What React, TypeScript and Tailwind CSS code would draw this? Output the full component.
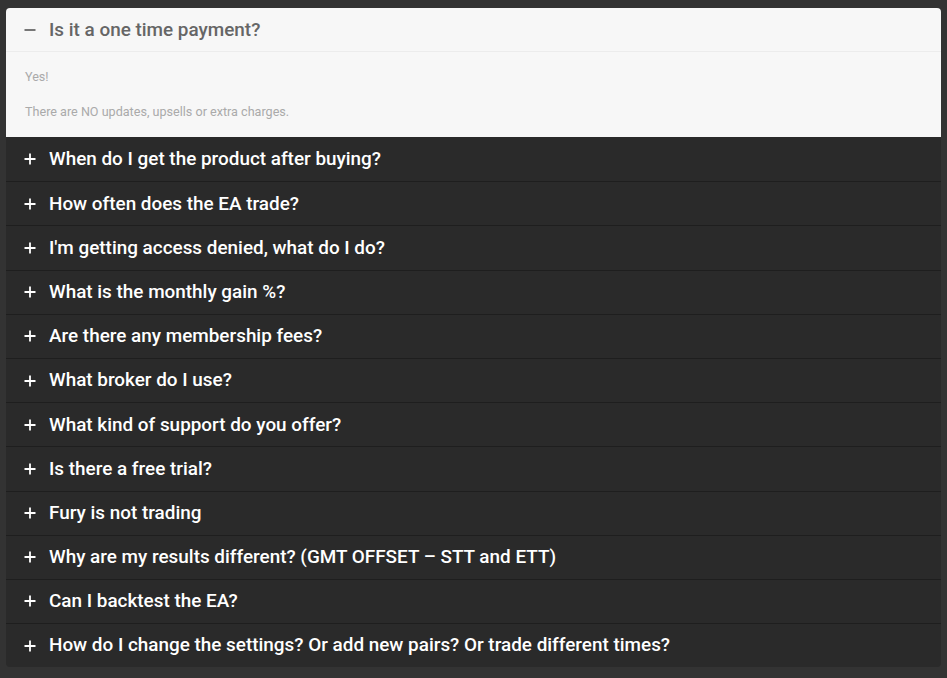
const questions = [
  "When do I get the product after buying?",
  "How often does the EA trade?",
  "I'm getting access denied, what do I do?",
  "What is the monthly gain %?",
  "Are there any membership fees?",
  "What broker do I use?",
  "What kind of support do you offer?",
  "Is there a free trial?",
  "Fury is not trading",
  "Why are my results different? (GMT OFFSET – STT and ETT)",
  "Can I backtest the EA?",
  "How do I change the settings? Or add new pairs? Or trade different times?",
];

function PlusIcon() {
  return (
    <svg width="12" height="12" viewBox="0 0 12 12" className="shrink-0">
      <path d="M6 0.5v11M0.5 6h11" stroke="#ffffff" strokeWidth="1.8" />
    </svg>
  );
}

function MinusIcon() {
  return (
    <svg width="12" height="12" viewBox="0 0 12 12" className="shrink-0">
      <path d="M0.5 6h11" stroke="#777777" strokeWidth="1.8" />
    </svg>
  );
}

export default function App() {
  return (
    <div
      className="min-h-[678px] w-full bg-[#333333] pt-2 pb-[11px] pl-[6px] pr-[6px]"
      style={{ fontFamily: "Roboto, 'Liberation Sans', sans-serif" }}
    >
      <div className="rounded-[4px] overflow-hidden bg-[#2a2a2a]">
        {/* open item */}
        <div className="bg-[#f7f7f7]">
          <div className="flex items-center gap-[13px] h-[44px] pt-[1px] pl-[18px] border-b border-[#ececec]">
            <MinusIcon />
            <span className="text-[18.9px] font-medium text-[#666666]">
              Is it a one time payment?
            </span>
          </div>
          <div className="pl-[19px] pt-[16px] pb-[16px] text-[12.6px] text-[#aaaaaa] leading-[18px]">
            <p>Yes!</p>
            <p className="mt-[17px]">There are NO updates, upsells or extra charges.</p>
          </div>
        </div>

        {/* closed items */}
        {questions.map((q, i) => (
          <div
            key={q}
            className={
              "flex items-center gap-[13px] h-[44.2px] pl-[18px] " +
              (i > 0 ? "border-t border-[#1e1e1e]" : "")
            }
          >
            <PlusIcon />
            <span className="text-[18.9px] font-medium text-white">{q}</span>
          </div>
        ))}
      </div>
    </div>
  );
}
